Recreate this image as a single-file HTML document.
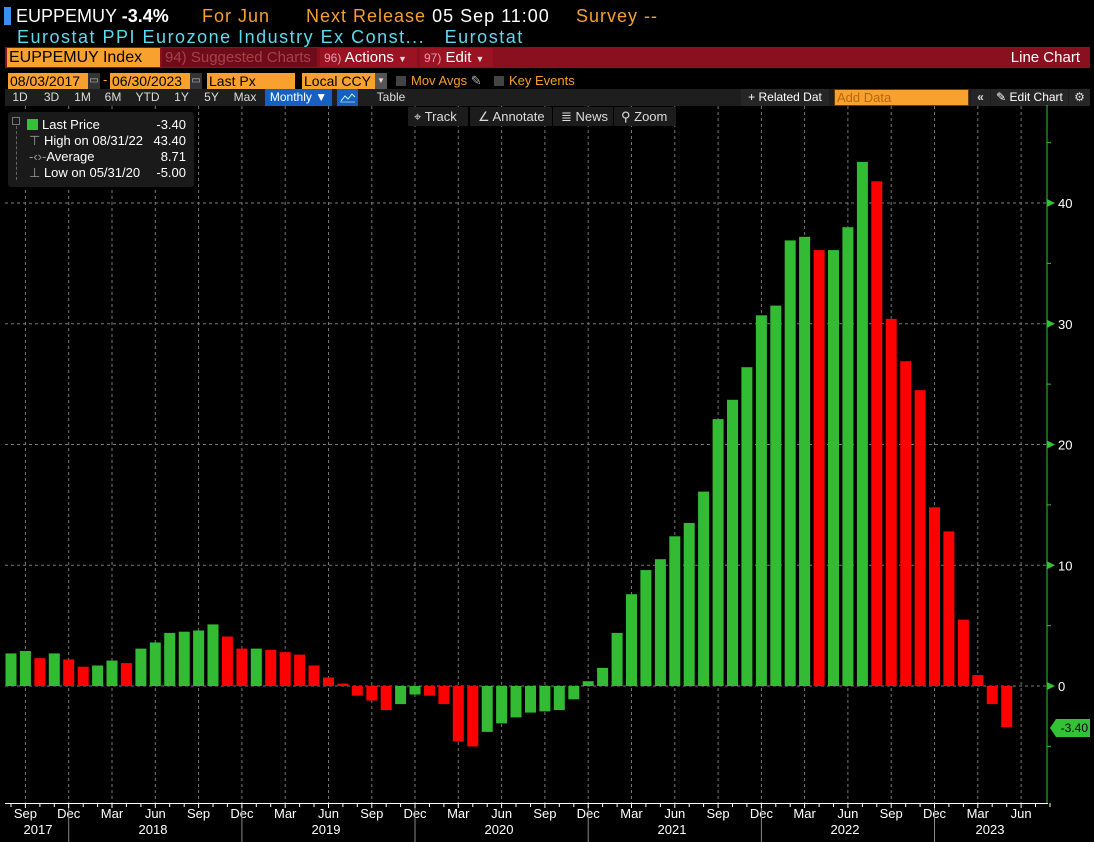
<!DOCTYPE html>
<html><head><meta charset="utf-8">
<style>
*{margin:0;padding:0;box-sizing:border-box}
body{width:1094px;height:842px;background:#000;overflow:hidden;position:relative;font-family:"Liberation Sans",sans-serif;color:#fff}
.a{position:absolute;white-space:nowrap}
.or{color:#f5a030}
.inp{position:absolute;background:#f9a12e;color:#000;font-size:14px;line-height:16px;padding-left:2px;height:16px;top:73px}
.cal{position:absolute;top:73px;height:16px;width:12px;background:#333;color:#bbb;font-size:10px;text-align:center;line-height:16px}
.btn{position:absolute;top:89px;height:17px;font-size:12px;line-height:17px;color:#ddd;text-align:center;background:#1e1e1e}
.tb{position:absolute;top:107px;height:19px;background:#1c1c1c;color:#ddd;font-size:13px;line-height:19px}
</style></head><body>
<div class="a" style="left:4px;top:7px;width:7px;height:18px;background:#3a8ff0"></div>
<div class="a" style="left:16px;top:5px;font-size:18px;line-height:22px">EUPPEMUY <b>-3.4%</b></div>
<div class="a or" style="left:202px;top:5px;font-size:18px;line-height:22px;letter-spacing:1px">For Jun</div>
<div class="a" style="left:306px;top:5px;font-size:18px;line-height:22px;letter-spacing:1px"><span class="or">Next Release</span> 05 Sep 11:00</div>
<div class="a or" style="left:576px;top:5px;font-size:18px;line-height:22px;letter-spacing:1px">Survey --</div>
<div class="a" style="left:17px;top:26px;font-size:18px;line-height:22px;color:#5fd9ec;letter-spacing:1.5px">Eurostat PPI Eurozone Industry Ex Const...&nbsp;&nbsp; Eurostat</div>

<div class="a" style="left:5px;top:47px;width:1085px;height:21px;background:#8a1020"></div>
<div class="a" style="left:7px;top:48px;width:153px;height:19px;background:#f9a12e;color:#000;font-size:16px;line-height:19px;padding-left:2px">EUPPEMUY Index</div>
<div class="a" style="left:162px;top:48px;width:155px;height:19px;background:#6e0d19;color:#a8404a;font-size:15px;line-height:19px;padding-left:3px">94) Suggested Charts</div>
<div class="a" style="left:320px;top:48px;width:97px;height:19px;background:#9b1223;font-size:15px;line-height:19px;padding-left:4px"><span style="color:#e0a0a8;font-size:12px">96)</span> Actions <span style="font-size:9px;color:#ddd">▼</span></div>
<div class="a" style="left:420px;top:48px;width:73px;height:19px;background:#9b1223;font-size:15px;line-height:19px;padding-left:4px"><span style="color:#e0a0a8;font-size:12px">97)</span> Edit <span style="font-size:9px;color:#ddd">▼</span></div>
<div class="a" style="right:14px;top:48px;font-size:15px;line-height:19px">Line Chart</div>

<div class="inp" style="left:8px;width:80px">08/03/2017</div><div class="cal" style="left:88px">▭</div>
<div class="a" style="left:103px;top:72px;font-size:13px;color:#f5a030">-</div>
<div class="inp" style="left:110px;width:80px">06/30/2023</div><div class="cal" style="left:190px">▭</div>
<div class="inp" style="left:207px;width:88px">Last Px</div>
<div class="inp" style="left:302px;width:73px">Local CCY</div><div class="cal" style="left:375px;background:#555;color:#ddd;font-size:8px">▼</div>
<div class="a" style="left:396px;top:76px;width:10px;height:10px;background:#444"></div>
<div class="a or" style="left:411px;top:73px;font-size:13px;line-height:16px">Mov Avgs <span style="color:#aaa">✎</span></div>
<div class="a" style="left:494px;top:76px;width:10px;height:10px;background:#444"></div>
<div class="a or" style="left:509px;top:73px;font-size:13px;line-height:16px">Key Events</div>

<div class="a" style="left:5px;top:89px;width:1085px;height:17px;background:#1e1e1e"></div>
<div class="btn" style="left:5px;width:30px">1D</div>
<div class="btn" style="left:36px;width:31px">3D</div>
<div class="btn" style="left:68px;width:29px">1M</div>
<div class="btn" style="left:98px;width:30px">6M</div>
<div class="btn" style="left:129px;width:37px">YTD</div>
<div class="btn" style="left:167px;width:29px">1Y</div>
<div class="btn" style="left:197px;width:29px">5Y</div>
<div class="btn" style="left:227px;width:36px">Max</div>
<div class="btn" style="left:265px;width:67px;background:#1560c0;color:#fff">Monthly ▼</div>
<div class="btn" style="left:337px;width:21px;background:#1560c0"><svg width="21" height="17"><path d="M4 12 L8 7 L11 10 L15 5 L18 8" stroke="#cfe" fill="none"/><path d="M3 13H18" stroke="#9bd" /></svg></div>
<div class="btn" style="left:360px;width:62px">Table</div>
<div class="btn" style="left:741px;width:88px;background:#262626;color:#fff">+ Related Dat</div>
<div class="a" style="left:834px;top:89px;width:135px;height:17px;background:#f9a12e;border:1px solid #6a3a00;color:#b06b10;font-size:13px;line-height:15px;padding-left:2px">Add Data</div>
<div class="btn" style="left:971px;width:19px;background:#262626;font-weight:bold">«</div>
<div class="btn" style="left:991px;width:77px;background:#262626;color:#fff">✎ Edit Chart</div>
<div class="btn" style="left:1069px;width:21px;background:#262626">⚙</div>

<svg class="a" style="left:0;top:0" width="1094" height="842" id="ch"></svg>

<div class="tb" style="left:408px;width:60px;padding-left:6px">⌖ Track</div>
<div class="tb" style="left:470px;width:82px;padding-left:8px">∠ Annotate</div>
<div class="tb" style="left:553px;width:60px;padding-left:8px">≣ News</div>
<div class="tb" style="left:614px;width:62px;padding-left:7px">⚲ Zoom</div>

<div class="a" style="left:8px;top:112px;width:186px;height:75px;background:#1a1a1a;border-radius:3px"></div>
<div class="a" style="left:12px;top:117px;width:8px;height:8px;border:1px solid #777"></div>
<div class="a" style="left:16px;top:126px;width:1px;height:54px;border-left:1px dashed #666"></div>
<div class="a" style="left:27px;top:119px;width:11px;height:11px;background:#33c233"></div>
<div class="a" style="left:29px;top:117px;font-size:13px;line-height:16px;color:#fff">
<div style="padding-left:13px">Last Price</div>
<div><span style="color:#999">⊤</span> High on 08/31/22</div>
<div><span style="color:#999">-‹›-</span>Average</div>
<div><span style="color:#999">⊥</span> Low on 05/31/20</div></div>
<div class="a" style="left:140px;top:117px;width:46px;text-align:right;font-size:13px;line-height:16px">-3.40<br>43.40<br>8.71<br>-5.00</div>

<div class="a" style="left:1050px;top:719px;width:40px;height:18px;background:#33c233;color:#000;font-size:12px;line-height:18px;text-align:right;padding-right:2px;clip-path:polygon(6px 0,100% 0,100% 100%,6px 100%,0 50%)">-3.40</div>

<script>
var v=[2.7,2.9,2.3,2.7,2.2,1.6,1.7,2.1,1.9,3.1,3.6,4.4,4.5,4.6,5.1,4.1,3.1,3.1,3.0,2.8,2.6,1.7,0.7,0.2,-0.8,-1.2,-2.0,-1.5,-0.7,-0.8,-1.5,-4.6,-5.0,-3.8,-3.1,-2.6,-2.2,-2.1,-2.0,-1.1,0.4,1.5,4.4,7.6,9.6,10.5,12.4,13.5,16.1,22.1,23.7,26.4,30.7,31.5,36.9,37.2,36.1,36.1,38.0,43.4,41.8,30.4,26.9,24.5,14.8,12.8,5.5,0.9,-1.5,-3.4];
var s='';function X(n){return 11+14.43*n}function Y(a){return 686-12.075*a}
var mo=['Sep','Dec','Mar','Jun'];
for(var n=1;n<=70;n+=3){var x=X(n).toFixed(1);s+='<line x1="'+x+'" y1="106" x2="'+x+'" y2="803" stroke="#777" stroke-dasharray="3,3"/>';
s+='<text x="'+x+'" y="818" fill="#fff" font-size="13" text-anchor="middle" font-family="Liberation Sans">'+mo[((n-1)/3)%4]+'</text>';
if(mo[((n-1)/3)%4]=='Dec')s+='<line x1="'+x+'" y1="806" x2="'+x+'" y2="842" stroke="#888"/>';}
for(var t=0;t<=40;t+=10){var y=Y(t);s+='<line x1="5" y1="'+y+'" x2="1047" y2="'+y+'" stroke="#777" stroke-dasharray="3,3"/><path d="M1047 '+(y-4)+'L1055 '+y+'L1047 '+(y+4)+'Z" fill="#33c233"/><text x="1058" y="'+(y+5)+'" fill="#fff" font-size="13" font-family="Liberation Sans">'+t+'</text>';}
for(var t=-5;t<=45;t+=10){var y=Y(t);s+='<line x1="1047" y1="'+y+'" x2="1051" y2="'+y+'" stroke="#33c233"/>';}
for(var i=0;i<v.length;i++){var up=i==0?true:v[i]>=v[i-1];var c=up?'#33bb33':'#ff0000';var y0=Y(Math.max(v[i],0)),h=Math.abs(v[i])*12.075;s+='<rect x="'+(X(i)-5.5).toFixed(1)+'" y="'+y0.toFixed(1)+'" width="11" height="'+Math.max(h,1).toFixed(1)+'" fill="'+c+'"/>';}
s+='<line x1="1047" y1="105" x2="1047" y2="803" stroke="#33c233"/>';
s+='<line x1="5" y1="803.5" x2="1048" y2="803.5" stroke="#fff"/>';
for(var n=0;n<=72;n++){var x=X(n).toFixed(1);s+='<line x1="'+x+'" y1="803" x2="'+x+'" y2="'+(n%3==1?808:807)+'" stroke="#fff"/>';}
var yr=[['2017',38],['2018',153],['2019',326],['2020',499],['2021',672],['2022',845],['2023',990]];
yr.forEach(function(a){s+='<text x="'+a[1]+'" y="834" fill="#fff" font-size="13" text-anchor="middle" font-family="Liberation Sans">'+a[0]+'</text>';});
document.getElementById('ch').innerHTML=s;
</script>
</body></html>
